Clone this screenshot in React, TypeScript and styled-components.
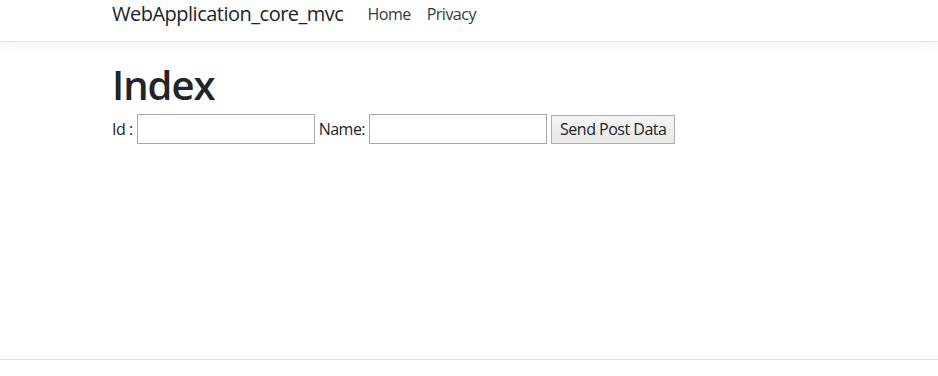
import styled, { createGlobalStyle } from 'styled-components';

const GlobalStyle = createGlobalStyle`
  html, body {
    margin: 0;
    height: 100%;
  }
  body {
    font-family: "Segoe UI", "Open Sans", "Liberation Sans", sans-serif;
    font-size: 16px;
    letter-spacing: -0.5px;
    color: #212529;
    background: #ffffff;
  }
  #root {
    height: 100%;
  }
`;

const Page = styled.div`
  min-height: 100%;
  display: flex;
  flex-direction: column;
`;

const Header = styled.header`
  height: 42px;
  border-bottom: 1px solid #e5e5e5;
  box-shadow: 0 4px 12px rgba(0, 0, 0, 0.05);
  box-sizing: border-box;
`;

const Container = styled.div`
  padding-left: 112px;
`;

const NavBar = styled(Container)`
  display: flex;
  align-items: center;
  height: 100%;
  padding-bottom: 14px;
  box-sizing: border-box;
`;

const Brand = styled.a`
  font-size: 20px;
  color: #212529;
  text-decoration: none;
  margin-right: 16px;
`;

const NavLink = styled.a`
  font-size: 16px;
  color: #343a40;
  text-decoration: none;
  padding: 0 8px;
`;

const Main = styled(Container)`
  padding-top: 19px;
`;

const Title = styled.h1`
  font-size: 40px;
  font-weight: 600;
  line-height: 1.2;
  letter-spacing: -1px;
  margin: 0 0 5px;
`;

const Form = styled.form`
  display: flex;
  align-items: center;
  gap: 4px;
`;

const Label = styled.label`
  font-size: 16px;
`;

const Input = styled.input`
  width: 178px;
  height: 30px;
  box-sizing: border-box;
  border: 1px solid #a9a9a9;
  padding: 2px 4px;
  font: inherit;
`;

const Button = styled.button`
  height: 29px;
  box-sizing: border-box;
  padding: 0 8px;
  font: inherit;
  letter-spacing: inherit;
  color: #212529;
  border: 1px solid #adadad;
  background: linear-gradient(#f5f5f5, #e8e8e8);
  border-radius: 0;
`;

const Footer = styled.footer`
  margin-top: auto;
  height: 16px;
  border-top: 1px solid #dee2e6;
`;

export default function App() {
  return (
    <Page>
      <GlobalStyle />
      <Header>
        <NavBar>
          <Brand href="#">WebApplication_core_mvc</Brand>
          <NavLink href="#">Home</NavLink>
          <NavLink href="#">Privacy</NavLink>
        </NavBar>
      </Header>
      <Main>
        <Title>Index</Title>
        <Form onSubmit={(e) => e.preventDefault()}>
          <Label>Id :</Label>
          <Input type="text" />
          <Label>Name:</Label>
          <Input type="text" />
          <Button type="submit">Send Post Data</Button>
        </Form>
      </Main>
      <Footer />
    </Page>
  );
}
